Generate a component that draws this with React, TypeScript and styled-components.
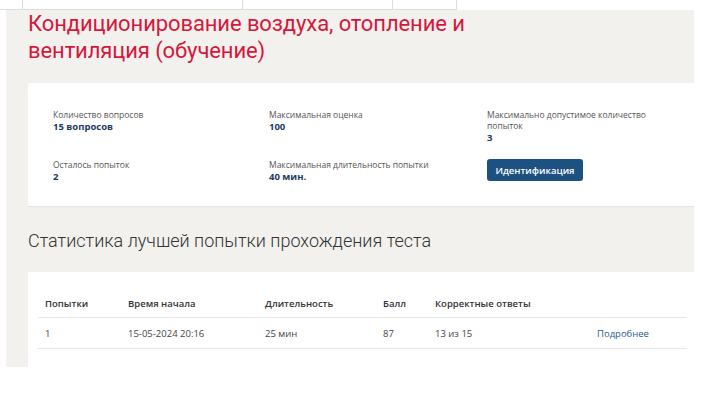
import React from "react";
import styled, { createGlobalStyle } from "styled-components";

const GlobalStyle = createGlobalStyle`
  html, body {
    margin: 0;
    padding: 0;
    background: #fff;
  }
  body {
    font-family: "Open Sans", "Liberation Sans", sans-serif;
  }
`;

interface InfoItem {
  label: string;
  value?: string;
}

interface Attempt {
  num: string;
  start: string;
  duration: string;
  score: string;
  correct: string;
}

const infoRows: InfoItem[][] = [
  [
    { label: "Количество вопросов", value: "15 вопросов" },
    { label: "Максимальная оценка", value: "100" },
    { label: "Максимально допустимое количество попыток", value: "3" },
  ],
  [
    { label: "Осталось попыток", value: "2" },
    { label: "Максимальная длительность попытки", value: "40 мин." },
  ],
];

const attempts: Attempt[] = [
  {
    num: "1",
    start: "15-05-2024 20:16",
    duration: "25 мин",
    score: "87",
    correct: "13 из 15",
  },
];

const columns = [
  { title: "Попытки", width: 83 },
  { title: "Время начала", width: 137 },
  { title: "Длительность", width: 118 },
  { title: "Балл", width: 52 },
  { title: "Корректные ответы", width: 162 },
  { title: "", width: 97 },
];

const App = () => {
  return (
    <>
      <GlobalStyle />
      <TopStrip>
        <StripCell $width={23} />
        <StripCell $width={220} />
        <StripCell $width={150} />
        <StripCell $width={64} />
      </TopStrip>
      <Panel>
        <Title>Кондиционирование воздуха, отопление и вентиляция (обучение)</Title>
        <InfoCard>
          {infoRows[0].map((item) => (
            <InfoCell key={item.label}>
              <InfoLabel>{item.label}</InfoLabel>
              <InfoValue>{item.value}</InfoValue>
            </InfoCell>
          ))}
          {infoRows[1].map((item) => (
            <InfoCell key={item.label}>
              <InfoLabel>{item.label}</InfoLabel>
              <InfoValue>{item.value}</InfoValue>
            </InfoCell>
          ))}
          <InfoCell>
            <IdentButton>Идентификация</IdentButton>
          </InfoCell>
        </InfoCard>
        <SectionTitle>Статистика лучшей попытки прохождения теста</SectionTitle>
        <TableCard>
          <StatsTable>
            <colgroup>
              {columns.map((c, i) => (
                <col key={i} style={{ width: c.width }} />
              ))}
            </colgroup>
            <thead>
              <tr>
                {columns.map((c, i) => (
                  <HeadCell key={i}>{c.title}</HeadCell>
                ))}
              </tr>
            </thead>
            <tbody>
              {attempts.map((a) => (
                <tr key={a.num}>
                  <BodyCell>{a.num}</BodyCell>
                  <BodyCell>{a.start}</BodyCell>
                  <BodyCell>{a.duration}</BodyCell>
                  <BodyCell>{a.score}</BodyCell>
                  <BodyCell>{a.correct}</BodyCell>
                  <BodyCell>
                    <MoreLink href="#">Подробнее</MoreLink>
                  </BodyCell>
                </tr>
              ))}
            </tbody>
          </StatsTable>
        </TableCard>
      </Panel>
    </>
  );
};

export default App;

const TopStrip = styled.div`
  display: flex;
  height: 9px;
  width: 457px;
  border-bottom: 1px solid #dcdcdc;
`;

const StripCell = styled.div<{ $width: number }>`
  width: ${(p) => p.$width}px;
  border-right: 1px solid #dcdcdc;
  box-sizing: border-box;
`;

const Panel = styled.main`
  margin-left: 6px;
  width: 688px;
  background: #f2f1ee;
  padding: 0 0 0 22px;
  box-sizing: border-box;
`;

const Title = styled.h1`
  margin: 0;
  max-width: 470px;
  font-family: Roboto, "Liberation Sans", sans-serif;
  font-weight: 400;
  font-size: 22px;
  line-height: 27px;
  letter-spacing: -0.1px;
  color: #d5173c;
`;

const InfoCard = styled.section`
  margin-top: 19px;
  height: 124px;
  box-sizing: border-box;
  padding: 26px 0 0 25px;
  background: #fff;
  border-bottom: 1px solid #e4e4e4;
  display: grid;
  grid-template-columns: 216px 218px 190px;
  row-gap: 15px;
  align-items: start;
  align-content: start;
`;

const InfoCell = styled.div`
  display: flex;
  flex-direction: column;
`;

const InfoLabel = styled.span`
  font-size: 8.5px;
  line-height: 11px;
  color: #555;
`;

const InfoValue = styled.span`
  margin-top: 1px;
  font-size: 9.5px;
  line-height: 12px;
  font-weight: 700;
  color: #1d3a5f;
`;

const IdentButton = styled.button`
  width: 96px;
  height: 22px;
  padding: 0;
  border: none;
  border-radius: 3px;
  background: #1c5182;
  color: #fff;
  font-family: "Open Sans", "Liberation Sans", sans-serif;
  font-size: 9.5px;
  font-weight: 600;
  cursor: pointer;
`;

const SectionTitle = styled.h2`
  margin: 23px 0 0;
  font-family: Roboto, "Liberation Sans", sans-serif;
  font-weight: 300;
  font-size: 18px;
  line-height: 22px;
  color: #333;
`;

const TableCard = styled.section`
  margin-top: 20px;
  background: #fff;
  padding: 18px 7px 18px 10px;
`;

const StatsTable = styled.table`
  width: 649px;
  border-collapse: collapse;
  table-layout: fixed;
  font-size: 9.5px;
`;

const HeadCell = styled.th`
  height: 27px;
  padding: 0 7px;
  text-align: left;
  font-weight: 600;
  color: #333;
  border-bottom: 1px solid #e6e6e6;
`;

const BodyCell = styled.td`
  height: 30px;
  padding: 0 7px;
  color: #444;
  border-bottom: 1px solid #e6e6e6;
`;

const MoreLink = styled.a`
  color: #2a5c90;
  text-decoration: none;
`;
